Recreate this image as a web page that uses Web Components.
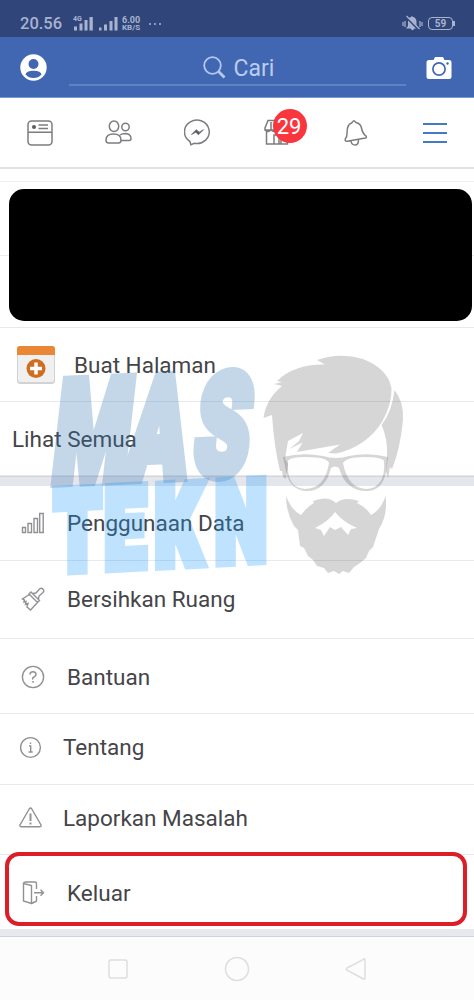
<!DOCTYPE html>
<html lang="id">
<head>
<meta charset="utf-8">
<title>Menu</title>
<style>
html,body{margin:0;padding:0;background:#fff}
body{width:474px;height:1000px;overflow:hidden;font-family:Roboto,"Liberation Sans",sans-serif}
</style>
</head>
<body>
<app-screen></app-screen>
<script>
const define = (name, html) => customElements.define(name, class extends HTMLElement {
  constructor() {
    super();
    const t = document.createElement('template');
    t.innerHTML = html;
    this.attachShadow({ mode: 'open' }).append(t.content.cloneNode(true));
  }
});

define('status-bar', `
<style>
:host{display:flex;align-items:center;height:37px;background:#30467b;color:#a9b3cf;box-sizing:border-box;padding:10px 19px 0 20px}
.time{font-size:16.500px;font-weight:500;letter-spacing:0;line-height:27px;width:48px}
.g{font-size:7px;font-weight:700;line-height:6px}
.sig{display:grid;width:21px}
.sig>*{grid-area:1/1}
.net{font-size:9px;line-height:8px;font-weight:700;margin-left:3px;width:26px}
.net div{white-space:nowrap}
.right{margin-left:auto;display:flex;gap:5px;align-items:center}
.bat{border:1.5px solid #a9b3cf;border-radius:4px;width:23px;height:11px;font-size:10px;font-weight:700;line-height:12px;text-align:center}
svg{display:block}
</style>
<div class="time">20.56</div>
<div class="sig" style="margin-left:5px"><svg width="21" height="16"><path d="M1 14.500v-4h3v4zM6.500 14.500V7.500h3v7zM11.500 14.500V4h3v10.500zM16.500 14.500V1h3.300v13.500z" fill="#a9b3cf"/></svg><span class="g">4G</span></div>
<svg width="21" height="16" style="margin-left:4px"><path d="M1 14.500v-3h2.500v3zM6 14.500V8.500h3v6zM11.500 14.500V5h3v9.500zM16.500 14.500V1h3v13.500z" fill="#a9b3cf"/></svg>
<div class="net"><div>6.00</div><div style="font-size:8px">KB/S</div></div>
<svg width="14" height="4"><g fill="#a9b3cf"><circle cx="2" cy="2" r="1"/><circle cx="7" cy="2" r="1"/><circle cx="12" cy="2" r="1"/></g></svg>
<div class="right">
<svg width="21" height="17" viewBox="0 0 21 17"><path d="M6 11V6.500Q6 2.500 9 2l1-1 1 1q3.500.8 3.500 5V11l2 2.500h-4Q10.500 17 8.500 13.500H4z" fill="#a9b3cf"/><path d="M1 7v4M3 6v6M18 6v6M20 7v4" stroke="#a9b3cf" stroke-width="1.200"/><path d="M3 1l14 14" stroke="#30467b" stroke-width="2"/><path d="M4.500 1l13 13" stroke="#a9b3cf" stroke-width="1.300"/></svg>
<div class="bat">59</div><svg width="2" height="5" style="margin-left:-5px"><rect width="2" height="5" fill="#a9b3cf"/></svg>
</div>`);

define('search-bar', `
<style>
:host{display:flex;align-items:center;height:61px;background:#4267b2;box-sizing:border-box;padding:1px 21px 0 20px;border-bottom:1px solid #7c99cf}
svg{display:block}
.field{margin-left:22px;width:337px;height:36px;box-sizing:border-box;border-bottom:2px solid #6182c2;display:flex;justify-content:center;align-items:center;color:#b9cdf0;font-size:23px;letter-spacing:0;gap:8px;padding:2px 0 0 2px}
.field span{position:relative;top:1px}
.cam{margin-left:20px}
</style>
<svg width="27" height="27" viewBox="0 0 27 27"><circle cx="13.500" cy="13.500" r="13.200" fill="#fff"/><circle cx="13.500" cy="10" r="5" fill="#4267b2"/><path d="M5.500 20.500Q6 16.700 13.500 16.700T21.500 20.500Q18.500 24 13.500 24T5.500 20.500z" fill="#4267b2"/></svg>
<div class="field"><svg width="23" height="23" viewBox="0 0 23 23" fill="none" stroke="#b3c8ee"><circle cx="9.500" cy="9.500" r="8.300" stroke-width="1.800"/><path d="M15.500 15.500l6 6" stroke-width="2.800"/></svg><span>Cari</span></div>
<svg class="cam" width="26" height="24" viewBox="0 0 26 24"><path d="M3 4h4.500L9 1h8l1.500 3H23q2.500 0 2.500 2.500v14Q25.500 23 23 23H3Q.5 23 .5 20.500v-14Q.5 4 3 4z" fill="#fff"/><circle cx="13" cy="13" r="6.100" fill="none" stroke="#4267b2" stroke-width="1.700"/><circle cx="21.500" cy="7.500" r="1.200" fill="#4267b2"/></svg>`);

define('tab-bar', `
<style>
:host{display:flex;align-items:center;height:71px;box-sizing:border-box;border-bottom:2px solid #e2e2e3;background:#fff}
.t{width:79px;flex:none;display:grid;place-items:center;position:relative;height:69px}
svg{display:block;fill:none;stroke:#7c7d80;stroke-width:1.500}
.badge{position:absolute;left:36px;top:11px;width:34px;height:34px;border-radius:50%;background:#f9353e;color:#fff;font-size:22px;line-height:35px;text-align:center;text-indent:-2px}
</style>
<div class="t"><svg width="26" height="26" viewBox="0 0 26 26"><rect x="1" y="1" width="24" height="24" rx="3.500"/><path d="M1 12.200h24M11.500 5h9.500M11.500 8.500h9.500"/><circle cx="7" cy="7" r="2" fill="#5c5d60" stroke="none"/></svg></div>
<div class="t"><svg width="27" height="25" viewBox="0 0 27 25"><ellipse cx="9" cy="6.300" rx="4.700" ry="5.300"/><circle cx="20.500" cy="7" r="3.700"/><path d="M1 20Q1 14 8.500 14T16 20Q16 23 13.500 23h-10Q1 23 1 20zM15 15Q17 13.500 20.500 13.500 26 14 26 18.500 26 20.500 24 20.500h-8"/></svg></div>
<div class="t"><svg width="27" height="27" viewBox="0 0 27 27"><path d="M6 22.500l.8 3.300 3.500-1.600A12.400 11.700 0 1 0 6 22.500z"/><path d="M7.500 15.500l4.700-4.800 3 2.500 4.300-2.500-5 5-2.700-2.500z" fill="#55565a" stroke-width="1"/></svg></div>
<div class="t"><svg width="28" height="27" viewBox="0 0 28 27"><path d="M5 1.500h18l3 7.500v2H2V9zM2 11q3 3 6 0 3 3 6 0M3.500 12.500v12.500h21V12M11 25v-9h5v9M18 25v-9h5M8 3v8"/></svg><span class="badge">29</span></div>
<div class="t"><svg width="25" height="28" viewBox="0 0 25 28"><path d="M2.500 19.500Q4 18 4 14.500 4 5 8.500 4L9.500 3q1-2 2.500-.5l1 1Q17.500 4.500 18.500 9q1 5.500 4.500 8 1 1.500-.5 2L4 22.300q-2.700.2-1.500-2.800zM8 22q.5 4 4 4t3.500-5"/></svg></div>
<div class="t"><svg width="24" height="22" viewBox="0 0 24 22" style="stroke:#4479c7;stroke-width:1.800"><path d="M0 2h24M0 11h24M0 20h24"/></svg></div>`);

define('menu-row', `
<style>
:host{display:flex;align-items:center;box-sizing:border-box;height:var(--h);border-bottom:1px solid #e8e9eb;color:#444548;font-size:22.500px;letter-spacing:var(--ls,0);padding-left:var(--pl,0)}
.i{width:var(--iw);flex:none;display:flex}
.l{transform:translateY(var(--dy,0px));white-space:nowrap}
::slotted(svg){display:block;fill:none;stroke:#909194;stroke-width:1.400;transform:translateY(var(--dy,0px))}
</style><div class="i"><slot name="icon"></slot></div><div class="l"><slot></slot></div>`);

define('profile-cover', `
<style>
:host{display:grid;height:147px;box-sizing:border-box;border-bottom:1px solid #e8e9eb;border-top:1px solid #f0f0f1;grid-template-rows:74px 1fr}
.a{grid-area:1/1;border-bottom:1px solid #ececee}
.b{grid-area:1/1/3/2;background:#000;border-radius:15px;margin:7px 2px 6px 9px;z-index:1}
</style><div class="a"></div><div class="b"></div>`);

define('system-nav', `
<style>:host{display:flex;height:63px;background:#fcfcfd;justify-content:center;gap:94px;align-items:center;box-sizing:border-box}
svg{fill:none;stroke:#dededf;stroke-width:1.500;display:block}</style>
<svg width="24" height="24"><rect x="3" y="3" width="18" height="18" rx="2"/></svg>
<svg width="26" height="26"><circle cx="13" cy="13" r="11.500"/></svg>
<svg width="24" height="24"><path d="M19.500 2.500Q21 1 21 3v18q0 2-1.500 1L3 13.200q-1.500-1.200 0-2.200z"/></svg>`);

define('brand-mark', `
<style>:host{display:block}svg{display:block;overflow:visible}text{font-family:Roboto,sans-serif;font-weight:900;stroke-linejoin:miter}</style>
<svg width="420" height="310" viewBox="20 315 420 310">
<text opacity=".28" transform="translate(50 482) rotate(-2.500) skewX(-9) scale(.62 1)" font-size="140" x="0 119 228" fill="#3074b4" stroke="#3074b4" stroke-width="12">MAS</text>
<text opacity=".27" transform="translate(58 570) rotate(-3) skewX(-3) scale(.66 1)" font-size="110" x="-5 71 147 239" fill="#169bff" stroke="#169bff" stroke-width="12">TEKN</text>
<g fill="#323232" fill-opacity=".2" fill-rule="evenodd">
<path d="M263.500 418Q266 399 282 386l-8-2 8-2-5-1Q294 364 325 364.500L317 360Q340 352 363 359 388 369 391.500 388 392 404 382 422 366 447 336 453.500L328 453 340 444.500 297 452 302.500 442.500 289.500 449 299 441 303 433 288 441 285 459 288 464 286 479 283 477 282 471 280 471Q274 446 272 415z"/>
<path d="M394.500 390Q404 402 403 420 400 450 392 469L390 467 388 478 386 472 387 457Q388 439 381.500 425 392 412 394.500 390z"/>
<path d="M283 457Q302 452 323 456 336 460 349 456 368 452 388 457L387 465Q385 490 368 491 346 492 339 468 335 465 331 468 325 492 306 491 288 490 285 466zM288 461Q286 488 305 489 325 489 329 463 327 457 306 457 290 457 288 461zM343 463Q348 489 367 489 386 487 384 461 382 457 364 457 347 457 343 463z"/>
<path d="M286 496Q292 511 301 515 308 506 314 503L313 501Q328 495 336 503 344 496 359 501L357 503Q366 507 371 515 381 510 385.500 496 388 515 379 529L373 547 369 551 366 558 360 563 354 567 349 573 343 571 339 574 334 571 328 573 324 568 317 566 313 560 308 556 304 548 300 546 298 530 294 526Q286 512 286 496zM335 512Q329 521 315 528L321 530 324 536 330 527 335 530 341 527 348 535 351 529 357 528Q343 522 335 512z"/>
</g></svg>`);

define('app-screen', `
<style>
:host{display:block;position:relative;width:474px;height:1000px;overflow:hidden;background:#fff}
main{display:flex;flex-direction:column}
.gap{height:12px}
.band{background:#e5e6eb;border-top:1px solid #d4d5da;box-sizing:border-box;height:10px}
.low{height:8px;border:0;border-bottom:1.500px solid #ccd5df;background:#e7e9ec}
.exit{height:74px;box-sizing:border-box;border:4px solid #dc1e29;border-radius:14px;margin:-3px 7px 3px 5px}
brand-mark{position:absolute;left:20px;top:315px;pointer-events:none}
</style>
<main>
<status-bar></status-bar><search-bar></search-bar><tab-bar></tab-bar>
<div class="gap"></div>
<profile-cover></profile-cover>
<menu-row style="--h:74px;--pl:16px;--iw:58px"><svg slot="icon" width="40" height="40" viewBox="0 0 40 40" style="stroke:none"><rect x="1" y="1" width="38" height="38" rx="3.500" fill="#d2d2d5"/><rect x="2" y="2" width="36" height="35" rx="2.500" fill="#f0f0f1"/><path d="M1 10V4q0-3 3-3h32q3 0 3 3v6z" fill="#ea8735"/><circle cx="20" cy="23.500" r="9.500" fill="#cf6d20"/><path d="M20 17.500v12M14 23.500h12" stroke="#fff" stroke-width="3.500"/></svg>Buat Halaman</menu-row>
<menu-row style="--h:74px;--pl:12px;--iw:0px">Lihat Semua</menu-row>
<div class="band"></div>
<menu-row style="--h:75px;--pl:21px;--iw:46px"><svg slot="icon" width="24" height="24" viewBox="0 0 24 24"><path d="M1.500 21.500v-5h3v5zM7 21.500v-9h3.500v9zM13 21.500V7.500h3.500v14zM18.700 21.500V2.500h3.500v19z"/></svg>Penggunaan Data</menu-row>
<menu-row style="--h:78px;--pl:21px;--iw:46px;--dy:-1px"><svg slot="icon" width="24" height="24" viewBox="0 0 24 24"><path d="M10 5l8.500 8.500-2 2-8.500-8.500zM12 6.500l3-.5 3.500-4q2-1.500 3.500.2t0 3.300l-4 3.500-.5 3M8.300 7.500L1.500 12l2 1-.5 2 2-.5-.5 3 2.500-1-1 3.500 3.500 3 7-7.500"/></svg>Bersihkan Ruang</menu-row>
<menu-row style="--h:75px;--pl:21px;--iw:46px;--dy:1px"><svg slot="icon" width="24" height="24" viewBox="0 0 24 24"><circle cx="12" cy="12" r="10.600"/><path d="M9 9.500Q9 6.700 12 6.700t3 2.800Q15 11 13 12t-1 2.500M12 16v1.800" stroke-width="1.500"/></svg>Bantuan</menu-row>
<menu-row style="--h:71px;--pl:19px;--iw:44px;--dy:-2px"><svg slot="icon" width="23" height="23" viewBox="0 0 23 23"><circle cx="11.500" cy="11.500" r="9.900"/><path d="M11.500 6.500V8M10 10h1.700v6M9.500 16h4.200"/></svg>Tentang</menu-row>
<menu-row style="--h:70px;--pl:19px;--iw:44px;--dy:-2px"><svg slot="icon" width="23" height="23" viewBox="0 0 23 23"><path d="M10.200 3q1.300-2 2.600 0L22 19q.5 1.800-1.500 1.800h-18Q.5 20.800 1 19z"/><path d="M11.500 7.500v7.500M11.500 16.500v2" stroke-width="2"/></svg>Laporkan Masalah</menu-row>
<div class="exit"><menu-row style="--h:66px;--pl:13px;--iw:45px;--dy:4px;border:0"><svg slot="icon" width="23" height="26" viewBox="0 0 23 26"><path d="M1.500 3.500l8 2v18l-8-2.500zM1.500 3.500Q2 2 3.500 2H13q1.500 0 1.500 1.500V9M9.500 23.500l3-1.500q2 0 2-2v-4M12 12.700h9M18.500 9.700l3 3-3 3"/></svg>Keluar</menu-row></div>
<div class="band low"></div>
<system-nav></system-nav>
</main>
<brand-mark></brand-mark>`);
</script>
</body>
</html>
